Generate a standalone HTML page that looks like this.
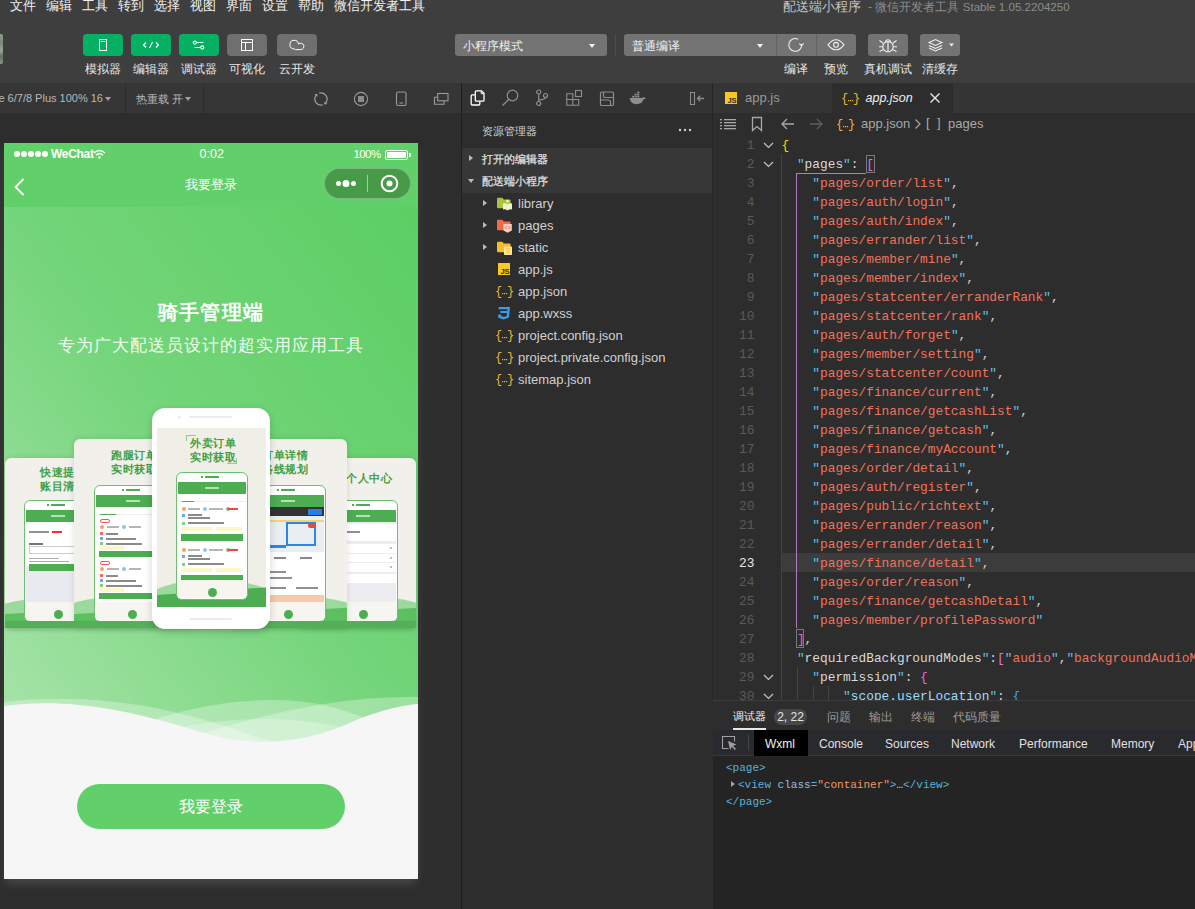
<!DOCTYPE html>
<html><head><meta charset="utf-8">
<style>
*{margin:0;padding:0;box-sizing:border-box}
html,body{width:1195px;height:909px;overflow:hidden;background:#2d2d2d;font-family:"Liberation Sans",sans-serif;color:#ccc}
.a{position:absolute}
svg{display:block}
#top{left:0;top:0;width:1195px;height:83px;background:#3e3e3e}
.menu{top:-3px;font-size:13px;color:#f0f0f0;white-space:nowrap}
.tbtn{top:34px;width:40px;height:22px;border-radius:4px;background:#05b062}
.tbtn.g{background:#6f6f6f}
.tlab{top:61px;font-size:12px;color:#e6e6e6;width:60px;text-align:center;white-space:nowrap}
.tri{width:0;height:0;border-left:3.5px solid transparent;border-right:3.5px solid transparent;border-top:4px solid #f0f0f0}
#simbar{left:0;top:83px;width:461px;height:30px;background:#363636}
#sim{left:0;top:113px;width:461px;height:796px;background:#2d2d2d}
#vline{left:461px;top:83px;width:1px;height:826px;background:#1e1e1e}
#actbar{left:462px;top:83px;width:251px;height:30px;background:#333333}
#side{left:462px;top:113px;width:250px;height:796px;background:#2d2d2d}
#sep{left:712px;top:83px;width:1px;height:617px;background:#262626}
#tabs{left:713px;top:83px;width:482px;height:30px;background:#353535}
#editor{left:713px;top:113px;width:482px;height:587px;background:#2d2d2d}
#panel{left:713px;top:700px;width:482px;height:209px;background:#252525}
.tri.r{border-top:3.5px solid transparent;border-bottom:3.5px solid transparent;border-left:4px solid #bbb;border-right:0}
.row{position:absolute;left:0;width:250px;height:22px}
.row .t2{position:absolute;left:21px;top:7.5px}
.row .fi{position:absolute;left:34px;top:3px}
.row span{position:absolute;left:56px;top:3.6px;font-size:13px;color:#d0d0d0;white-space:nowrap}
.ln{position:absolute;left:0;width:41.5px;text-align:right;font-family:"Liberation Mono",monospace;font-size:12.83px;line-height:19px;color:#5a5a5a}
.ln.cur{color:#e8e8e8}
.cl{position:absolute;font-family:"Liberation Mono",monospace;font-size:12.83px;line-height:19px;white-space:pre;color:#d4d4d4}
.q{color:#5fc0e8}.s{color:#f0725c}.k{color:#d8d8d8}.kb{color:#9cdcfe}.p{color:#d4d4d4}.y{color:#ffd700}.m{color:#da70d6}.b{color:#3aa3ff}
.dt{top:37px;font-size:12px;color:#e0e0e0;white-space:nowrap}
.tree{font-family:"Liberation Mono",monospace;font-size:11px;line-height:17px;white-space:pre}
.tg{color:#5db0d7}.at{color:#9bbbdc}.av{color:#f29766}
</style></head><body>
<div id="top" class="a">
 <div class="a menu" style="left:10px">文件</div>
 <div class="a menu" style="left:46px">编辑</div>
 <div class="a menu" style="left:82px">工具</div>
 <div class="a menu" style="left:118px">转到</div>
 <div class="a menu" style="left:154px">选择</div>
 <div class="a menu" style="left:190px">视图</div>
 <div class="a menu" style="left:226px">界面</div>
 <div class="a menu" style="left:262px">设置</div>
 <div class="a menu" style="left:298px">帮助</div>
 <div class="a menu" style="left:334px">微信开发者工具</div>
 <div class="a" style="left:783px;top:-2px;font-size:13px;white-space:nowrap;color:#c4c4c4">配送端小程序</div><div class="a" style="left:868px;top:-1px;font-size:12px;white-space:nowrap;color:#8c8c8c">- 微信开发者工具 <span style="font-size:11.6px">Stable 1.05.2204250</span></div>
 <div class="a" style="left:0;top:34px;width:3px;height:30px;background:linear-gradient(180deg,#8d9792 0%,#7c8a78 30%,#9aa09a 55%,#66705f 75%,#8b948c 100%);border-radius:0 2px 2px 0"></div>
 <div class="a tbtn" style="left:83px"><svg width="40" height="22"><rect x="16.5" y="5.5" width="7" height="11" fill="none" stroke="#fff" stroke-width="1"/><line x1="18" y1="7.5" x2="22" y2="7.5" stroke="#fff"/></svg></div>
 <div class="a tbtn" style="left:131px"><svg width="40" height="22"><path d="M15 8.5 L12.5 11 L15 13.5 M25 8.5 L27.5 11 L25 13.5 M21.5 8 L18.5 14" fill="none" stroke="#fff" stroke-width="1.1"/></svg></div>
 <div class="a tbtn" style="left:179px"><svg width="40" height="22"><path d="M17.5 8.5 H24.5 M15.5 13.5 H22" stroke="#fff" stroke-width="1" opacity="0.9"/><circle cx="15.8" cy="8.6" r="1.6" fill="none" stroke="#fff" stroke-width="1.1"/><circle cx="23.3" cy="13.5" r="1.6" fill="none" stroke="#fff" stroke-width="1.1"/></svg></div>
 <div class="a tbtn g" style="left:227px"><svg width="40" height="22"><rect x="14.5" y="5.5" width="11" height="11" fill="none" stroke="#fff"/><path d="M14.5 8.5 H25.5 M18.5 8.5 V16.5" stroke="#fff" fill="none"/></svg></div>
 <div class="a tbtn g" style="left:277px"><svg width="40" height="22"><path d="M17.2 14.9 A4.3 4.3 0 1 1 21.47 10.08 A3.2 3.2 0 1 1 23.7 15.6 L18.5 15.6 Q17.8 15.5 17.2 14.9 Z" fill="none" stroke="#fff" stroke-width="1"/></svg></div>
 <div class="a tlab" style="left:73px">模拟器</div>
 <div class="a tlab" style="left:121px">编辑器</div>
 <div class="a tlab" style="left:169px">调试器</div>
 <div class="a tlab" style="left:217px">可视化</div>
 <div class="a tlab" style="left:267px">云开发</div>

 <div class="a" style="left:455px;top:34px;width:152px;height:22px;background:#737373;border-radius:3px"></div>
 <div class="a" style="left:463px;top:38px;font-size:12px;color:#f0f0f0">小程序模式</div>
 <div class="a tri" style="left:589px;top:44px"></div>
 <div class="a" style="left:615px;top:34px;width:1px;height:22px;background:#4d4d4d"></div>
 <div class="a" style="left:624px;top:34px;width:232px;height:22px;background:#737373;border-radius:3px"></div>
 <div class="a" style="left:776px;top:34px;width:1px;height:22px;background:#626262"></div>
 <div class="a" style="left:816px;top:34px;width:1px;height:22px;background:#626262"></div>
 <div class="a" style="left:632px;top:38px;font-size:12px;color:#f0f0f0">普通编译</div>
 <div class="a tri" style="left:757px;top:44px"></div>
 <div class="a" style="left:777px;top:34px"><svg width="39" height="22"><path d="M21.20 5.25 A6.4 6.4 0 1 0 24.54 10.01 M22.24 9.61 L24.64 11.71 L26.54 9.21" fill="none" stroke="#f0f0f0" stroke-width="1.1"/></svg></div>
 <div class="a" style="left:817px;top:34px"><svg width="39" height="22"><path d="M11 10.8 Q19 0.8 27 10.8 Q19 20.8 11 10.8 Z" fill="none" stroke="#f0f0f0" stroke-width="1.1"/><circle cx="19" cy="10.8" r="2.4" fill="none" stroke="#f0f0f0" stroke-width="1.1"/></svg></div>
 <div class="a" style="left:868px;top:34px;width:40px;height:22px;background:#737373;border-radius:3px"><svg width="40" height="22"><circle cx="20" cy="12.8" r="5.2" fill="none" stroke="#f0f0f0" stroke-width="1.1"/><path d="M17 7.9 Q20 3.6 23 7.9" fill="none" stroke="#f0f0f0" stroke-width="1.1"/><line x1="20" y1="8.3" x2="20" y2="17.6" stroke="#d8d8d8" stroke-width="1.5"/><path d="M11.5 6.5 L15.2 9.2 M11 12.8 H14.8 M11.5 17.5 L15.2 15.8 M28.5 6.5 L24.8 9.2 M29 12.8 H25.2 M28.5 17.5 L24.8 15.8" fill="none" stroke="#f0f0f0" stroke-width="1.1"/></svg></div>
 <div class="a" style="left:920px;top:34px;width:40px;height:22px;background:#737373;border-radius:3px"><svg width="40" height="22"><path d="M9 8.5 L15.5 5.5 L22 8.5 L15.5 11.5 Z M9 11.5 L15.5 14.5 L22 11.5 M9 14 L15.5 17 L22 14" fill="none" stroke="#f0f0f0" stroke-width="1.1"/><path d="M29 9.5 L34 9.5 L31.5 12.5 Z" fill="#f0f0f0"/></svg></div>
 <div class="a tlab" style="left:766px">编译</div>
 <div class="a tlab" style="left:806px">预览</div>
 <div class="a tlab" style="left:858px">真机调试</div>
 <div class="a tlab" style="left:910px">清缓存</div>
</div>
<div id="simbar" class="a">
 <div class="a" style="right:358px;top:8.5px;font-size:11px;color:#b8b8b8;white-space:nowrap">iPhone 6/7/8 Plus 100% 16</div>
 <div class="a tri" style="left:105px;top:14px;border-top-color:#a0a0a0"></div>
 <div class="a" style="left:125px;top:0;width:1px;height:30px;background:#2e2e2e"></div>
 <div class="a" style="left:136px;top:8.5px;font-size:11px;color:#b8b8b8;white-space:nowrap">热重载 开</div>
 <div class="a tri" style="left:185px;top:14px;border-top-color:#a0a0a0"></div>
 <div class="a" style="left:203px;top:0;width:1px;height:30px;background:#2e2e2e"></div>
 <svg class="a" style="left:311px;top:6px" width="20" height="20"><path d="M8.22 4.17 A6.10 6.10 0 0 1 14.67 13.92 M11.89 15.80 A6.10 6.10 0 0 1 5.06 6.41" fill="none" stroke="#a0a0a0" stroke-width="1.2"/><path d="M13.39 15.45 L16.40 14.98 L13.33 12.41 Z M6.24 4.80 L3.27 5.48 L6.51 7.83 Z" fill="#a0a0a0"/></svg>
 <svg class="a" style="left:351px;top:6px" width="20" height="20"><circle cx="10" cy="10" r="6.6" fill="none" stroke="#9a9a9a" stroke-width="1.1"/><rect x="7" y="7" width="6" height="6" rx="0.5" fill="#8c8c8c"/></svg>
 <svg class="a" style="left:391px;top:6px" width="20" height="20"><rect x="5.5" y="3" width="9.5" height="13.5" rx="1.5" fill="none" stroke="#9a9a9a" stroke-width="1.1"/><line x1="8.5" y1="14" x2="12" y2="14" stroke="#9a9a9a" stroke-width="1.1"/></svg>
 <svg class="a" style="left:431px;top:5px" width="20" height="20"><rect x="6.7" y="5.5" width="10.3" height="7.3" fill="none" stroke="#9a9a9a" stroke-width="1.1"/><path d="M6.7 9.3 H3.5 V16.3 H13.1 V12.8" fill="none" stroke="#9a9a9a" stroke-width="1.1"/></svg>
</div>
<div id="sim" class="a"></div>
<div id="vline" class="a"></div>
<div class="a" style="left:4px;top:143px;width:414px;height:736px;box-shadow:0 6px 10px -2px rgba(150,150,150,0.3)"></div>
<div id="phone" class="a" style="left:4px;top:143px;width:414px;height:736px;overflow:hidden;background:#f6f6f6">
 <div class="a" style="left:0;top:64px;width:414px;height:540px;background:linear-gradient(to bottom left,#5bce63 0%,#74d57a 50%,#a9e4ab 100%)"></div>
 <div class="a" style="left:0;top:0;width:414px;height:64px;background:#62d06a"></div>
 <!-- status bar -->
 <svg class="a" style="left:9px;top:7.3px" width="36" height="8"><g fill="#fff"><circle cx="4" cy="4" r="3"/><circle cx="11" cy="4" r="3"/><circle cx="18" cy="4" r="3"/><circle cx="25" cy="4" r="3"/><circle cx="32" cy="4" r="3"/></g></svg>
 <div class="a" style="left:47px;top:4px;font-size:12px;font-weight:bold;color:#fff;letter-spacing:-0.3px">WeChat</div>
 <svg class="a" style="left:89px;top:6px" width="13" height="11"><path d="M1 4 Q6.5 -1 12 4 M3 6.2 Q6.5 3 10 6.2" fill="none" stroke="#fff" stroke-width="1.5"/><path d="M4.8 8 Q6.5 6.5 8.2 8 L6.5 10 Z" fill="#fff"/></svg>
 <div class="a" style="left:195.5px;top:3.5px;font-size:12.5px;color:#fff">0:02</div>
 <div class="a" style="left:349.5px;top:4.5px;font-size:11.5px;color:#fff;letter-spacing:-0.6px">100%</div>
 <div class="a" style="left:381px;top:7px;width:23px;height:10px;border:1px solid #fff;border-radius:2px;padding:1px"><div style="width:100%;height:100%;background:#fff;border-radius:1px"></div></div>
 <div class="a" style="left:404.5px;top:10px;width:2px;height:4px;background:#fff;border-radius:0 1px 1px 0"></div>
 <!-- nav -->
 <svg class="a" style="left:8px;top:34px" width="14" height="20"><path d="M11.5 2 L3.5 10 L11.5 18" fill="none" stroke="#fff" stroke-width="1.8"/></svg>
 <div class="a" style="left:0;top:33px;width:414px;text-align:center;font-size:13px;color:#fff">我要登录</div>
 <div class="a" style="left:320px;top:24.5px;width:87px;height:31px;border-radius:16px;background:#469a48;border:1px solid rgba(255,255,255,0.3)"></div>
 <svg class="a" style="left:320px;top:24.5px" width="87" height="31"><g fill="#fff"><circle cx="14.5" cy="15.5" r="2.5"/><circle cx="22" cy="15.5" r="3.5"/><circle cx="29.5" cy="15.5" r="2.5"/></g><line x1="43.5" y1="7" x2="43.5" y2="24" stroke="rgba(255,255,255,0.5)"/><circle cx="65.5" cy="15.5" r="7.8" fill="none" stroke="#fff" stroke-width="2"/><circle cx="65.5" cy="15.5" r="3" fill="#fff"/></svg>
 <!-- body text -->
 <div class="a" style="left:0;top:156px;width:414px;text-align:center;font-size:19.5px;font-weight:bold;color:#fff;letter-spacing:1.2px">骑手管理端</div>
 <div class="a" style="left:0;top:191px;width:414px;text-align:center;font-size:16.8px;color:rgba(255,255,255,0.92);letter-spacing:1px">专为广大配送员设计的超实用应用工具</div>
 <div id="mock"><div class="a" style="left:1.0px;top:315.0px;width:150.0px;height:170.0px;overflow:hidden;border-radius:6px 6px 0 0;background:#f1f0ea;box-shadow:0 0 6px rgba(0,0,0,0.12)">
<div class="a" style="left:-20px;top:138px;width:190px;height:40px;background:#9bd99c;border-radius:50% 50% 0 0"></div>
<div class="a" style="left:0;top:156px;width:150px;height:20px;background:#5cbf60;transform:skewY(-3deg);transform-origin:0 0"></div>
</div>
<div class="a" style="left:36.0px;top:322.0px;font-size:10.5px;color:#3f9f43;white-space:nowrap;letter-spacing:0.5px;line-height:14px;font-weight:bold">快速提现<br>账目清晰</div>
<div class="a" style="left:20.0px;top:357.0px;width:68.0px;height:122.0px;background:#fff;border:1.2px solid #6cc070;border-radius:6px"></div>
<div class="a" style="left:47.0px;top:361.0px;width:14.0px;height:1.5px;background:#4cae50"></div>
<div class="a" style="left:43.0px;top:361.0px;width:2.0px;height:1.5px;background:#4cae50"></div>
<div class="a" style="left:22.0px;top:367.0px;width:64.0px;height:12.0px;background:#4cae50"></div>
<div class="a" style="left:47.0px;top:372.0px;width:14.0px;height:2.0px;background:rgba(255,255,255,0.6)"></div>
<div class="a" style="left:22.0px;top:383.0px;width:64.0px;height:12.0px;background:#fff"></div>
<div class="a" style="left:25.0px;top:388.0px;width:20.0px;height:2.0px;background:#909090"></div>
<div class="a" style="left:48.0px;top:388.0px;width:10.0px;height:2.0px;background:#e33"></div>
<div class="a" style="left:22.0px;top:397.0px;width:64.0px;height:26.0px;background:#fff"></div>
<div class="a" style="left:25.0px;top:400.0px;width:14.0px;height:1.5px;background:#777"></div>
<div class="a" style="left:25.0px;top:403.0px;width:60.0px;height:8.0px;border:1px solid #ccc;background:#fff"></div>
<div class="a" style="left:25.0px;top:415.0px;width:30.0px;height:1.0px;background:#aaa"></div>
<div class="a" style="left:25.0px;top:418.0px;width:40.0px;height:1.0px;background:#aaa"></div>
<div class="a" style="left:22.0px;top:423.0px;width:64.0px;height:36.0px;background:#e9e9f0"></div>
<div class="a" style="left:25.0px;top:421.0px;width:58.0px;height:7.0px;background:#4cae50"></div>
<div class="a" style="left:22.0px;top:459.0px;width:64.0px;height:18.0px;background:#f6f5ef"></div>
<div class="a" style="left:49.5px;top:467.0px;width:9.0px;height:9.0px;background:#4cae50;border-radius:50%"></div>
<div class="a" style="left:296.0px;top:315.0px;width:116.0px;height:170.0px;overflow:hidden;border-radius:6px 6px 0 0;background:#f1f0ea;box-shadow:0 0 6px rgba(0,0,0,0.12)">
<div class="a" style="left:-20px;top:138px;width:156px;height:40px;background:#9bd99c;border-radius:50% 50% 0 0"></div>
<div class="a" style="left:0;top:156px;width:116px;height:20px;background:#5cbf60;transform:skewY(-3deg);transform-origin:0 0"></div>
</div>
<div class="a" style="left:342.0px;top:328.0px;font-size:10.5px;color:#3f9f43;white-space:nowrap;letter-spacing:0.5px;line-height:14px;font-weight:bold">个人中心</div>
<div class="a" style="left:324.0px;top:357.0px;width:70.0px;height:122.0px;background:#fff;border:1.2px solid #6cc070;border-radius:6px"></div>
<div class="a" style="left:352.0px;top:361.0px;width:14.0px;height:1.5px;background:#4cae50"></div>
<div class="a" style="left:348.0px;top:361.0px;width:2.0px;height:1.5px;background:#4cae50"></div>
<div class="a" style="left:326.0px;top:367.0px;width:66.0px;height:12.0px;background:#4cae50"></div>
<div class="a" style="left:352.0px;top:372.0px;width:14.0px;height:2.0px;background:rgba(255,255,255,0.6)"></div>
<div class="a" style="left:326.0px;top:379.0px;width:66.0px;height:80.0px;background:#ececf1"></div>
<div class="a" style="left:326.0px;top:381.0px;width:66.0px;height:17.0px;background:#fff"></div>
<div class="a" style="left:336.0px;top:388.0px;width:20.0px;height:1.5px;background:#909090"></div>
<div class="a" style="left:326.0px;top:401.0px;width:66.0px;height:8.5px;background:#fff"></div>
<div class="a" style="left:330.0px;top:404.5px;width:8.0px;height:1.5px;background:#777"></div>
<div class="a" style="left:386.0px;top:404.0px;width:2.0px;height:2.0px;background:#bbb"></div>
<div class="a" style="left:326.0px;top:410.5px;width:66.0px;height:8.5px;background:#fff"></div>
<div class="a" style="left:330.0px;top:414.0px;width:8.0px;height:1.5px;background:#777"></div>
<div class="a" style="left:386.0px;top:413.5px;width:2.0px;height:2.0px;background:#bbb"></div>
<div class="a" style="left:326.0px;top:420.0px;width:66.0px;height:8.5px;background:#fff"></div>
<div class="a" style="left:330.0px;top:423.5px;width:8.0px;height:1.5px;background:#777"></div>
<div class="a" style="left:386.0px;top:423.0px;width:2.0px;height:2.0px;background:#bbb"></div>
<div class="a" style="left:326.0px;top:431.0px;width:66.0px;height:9.0px;background:#fff"></div>
<div class="a" style="left:330.0px;top:434.5px;width:8.0px;height:1.5px;background:#777"></div>
<div class="a" style="left:326.0px;top:459.0px;width:66.0px;height:18.0px;background:#f6f5ef"></div>
<div class="a" style="left:354.5px;top:467.0px;width:9.0px;height:9.0px;background:#4cae50;border-radius:50%"></div>
<div class="a" style="left:70.0px;top:296.0px;width:120.0px;height:189.0px;overflow:hidden;border-radius:6px 6px 0 0;background:#f1f0ea;box-shadow:0 0 6px rgba(0,0,0,0.12)">
<div class="a" style="left:-20px;top:157px;width:160px;height:40px;background:#9bd99c;border-radius:50% 50% 0 0"></div>
<div class="a" style="left:0;top:175px;width:120px;height:20px;background:#5cbf60;transform:skewY(-3deg);transform-origin:0 0"></div>
</div>
<div class="a" style="left:107.0px;top:305.0px;font-size:10.5px;color:#3f9f43;white-space:nowrap;letter-spacing:0.5px;line-height:14px;font-weight:bold">跑腿订单<br>实时获取</div>
<div class="a" style="left:90.0px;top:342.0px;width:77.0px;height:137.0px;background:#fff;border:1.2px solid #6cc070;border-radius:6px"></div>
<div class="a" style="left:121.5px;top:346.0px;width:14.0px;height:1.5px;background:#4cae50"></div>
<div class="a" style="left:117.5px;top:346.0px;width:2.0px;height:1.5px;background:#4cae50"></div>
<div class="a" style="left:92.0px;top:352.0px;width:73.0px;height:12.0px;background:#4cae50"></div>
<div class="a" style="left:121.5px;top:357.0px;width:14.0px;height:2.0px;background:rgba(255,255,255,0.6)"></div>
<div class="a" style="left:92.0px;top:364.0px;width:73.0px;height:8.0px;background:#fff;border-bottom:1px solid #eee"></div>
<div class="a" style="left:96.0px;top:371.0px;width:16.0px;height:1.3px;background:#4cae50"></div>
<div class="a" style="left:92.0px;top:374.0px;width:73.0px;height:40.0px;background:#fff"></div>
<div class="a" style="left:96.0px;top:376.0px;width:10.0px;height:4.0px;border:1px solid #e55;border-radius:2px"></div>
<div class="a" style="left:96.0px;top:382.0px;width:4.0px;height:4.0px;background:#f7a35c;border-radius:2px"></div>
<div class="a" style="left:103.0px;top:383.0px;width:12.0px;height:1.5px;background:#b5b5b5"></div>
<div class="a" style="left:118.0px;top:382.0px;width:4.0px;height:4.0px;background:#8bc4f0;border-radius:2px"></div>
<div class="a" style="left:125.0px;top:383.0px;width:12.0px;height:1.5px;background:#b5b5b5"></div>
<div class="a" style="left:96.0px;top:389.0px;width:3.0px;height:3.0px;background:#f66"></div>
<div class="a" style="left:102.0px;top:390.0px;width:12.0px;height:1.5px;background:#8a8a8a"></div>
<div class="a" style="left:96.0px;top:394.0px;width:3.0px;height:3.0px;background:#6ae"></div>
<div class="a" style="left:102.0px;top:395.0px;width:30.0px;height:1.5px;background:#8a8a8a"></div>
<div class="a" style="left:96.0px;top:399.0px;width:3.0px;height:3.0px;background:#8c8"></div>
<div class="a" style="left:102.0px;top:400.0px;width:36.0px;height:1.5px;background:#8a8a8a"></div>
<div class="a" style="left:96.0px;top:403.0px;width:24.0px;height:4.0px;background:#fbf7c8"></div>
<div class="a" style="left:95.0px;top:408.0px;width:67.0px;height:6.0px;background:#4cae50"></div>
<div class="a" style="left:92.0px;top:416.0px;width:73.0px;height:40.0px;background:#fff"></div>
<div class="a" style="left:96.0px;top:418.0px;width:10.0px;height:4.0px;border:1px solid #e55;border-radius:2px"></div>
<div class="a" style="left:96.0px;top:424.0px;width:4.0px;height:4.0px;background:#f7a35c;border-radius:2px"></div>
<div class="a" style="left:103.0px;top:425.0px;width:12.0px;height:1.5px;background:#b5b5b5"></div>
<div class="a" style="left:118.0px;top:424.0px;width:4.0px;height:4.0px;background:#8bc4f0;border-radius:2px"></div>
<div class="a" style="left:125.0px;top:425.0px;width:12.0px;height:1.5px;background:#b5b5b5"></div>
<div class="a" style="left:96.0px;top:431.0px;width:3.0px;height:3.0px;background:#f66"></div>
<div class="a" style="left:102.0px;top:432.0px;width:12.0px;height:1.5px;background:#8a8a8a"></div>
<div class="a" style="left:96.0px;top:436.0px;width:3.0px;height:3.0px;background:#6ae"></div>
<div class="a" style="left:102.0px;top:437.0px;width:30.0px;height:1.5px;background:#8a8a8a"></div>
<div class="a" style="left:96.0px;top:441.0px;width:3.0px;height:3.0px;background:#8c8"></div>
<div class="a" style="left:102.0px;top:442.0px;width:36.0px;height:1.5px;background:#8a8a8a"></div>
<div class="a" style="left:96.0px;top:445.0px;width:24.0px;height:4.0px;background:#fbf7c8"></div>
<div class="a" style="left:95.0px;top:450.0px;width:67.0px;height:6.0px;background:#4cae50"></div>
<div class="a" style="left:92.0px;top:459.0px;width:73.0px;height:18.0px;background:#f6f5ef"></div>
<div class="a" style="left:124.0px;top:467.0px;width:9.0px;height:9.0px;background:#4cae50;border-radius:50%"></div>
<div class="a" style="left:226.0px;top:296.0px;width:117.0px;height:189.0px;overflow:hidden;border-radius:6px 6px 0 0;background:#f1f0ea;box-shadow:0 0 6px rgba(0,0,0,0.12)">
<div class="a" style="left:-20px;top:157px;width:157px;height:40px;background:#9bd99c;border-radius:50% 50% 0 0"></div>
<div class="a" style="left:0;top:175px;width:117px;height:20px;background:#5cbf60;transform:skewY(-3deg);transform-origin:0 0"></div>
</div>
<div class="a" style="left:258.0px;top:305.0px;font-size:10.5px;color:#3f9f43;white-space:nowrap;letter-spacing:0.5px;line-height:14px;font-weight:bold">订单详情<br>路线规划</div>
<div class="a" style="left:246.0px;top:342.0px;width:76.0px;height:137.0px;background:#fff;border:1.2px solid #6cc070;border-radius:6px"></div>
<div class="a" style="left:277.0px;top:346.0px;width:14.0px;height:1.5px;background:#4cae50"></div>
<div class="a" style="left:273.0px;top:346.0px;width:2.0px;height:1.5px;background:#4cae50"></div>
<div class="a" style="left:248.0px;top:352.0px;width:72.0px;height:12.0px;background:#4cae50"></div>
<div class="a" style="left:277.0px;top:357.0px;width:14.0px;height:2.0px;background:rgba(255,255,255,0.6)"></div>
<div class="a" style="left:248.0px;top:364.0px;width:72.0px;height:9.0px;background:#333"></div>
<div class="a" style="left:304.0px;top:365.5px;width:14.0px;height:6.0px;background:#2a7de1"></div>
<div class="a" style="left:248.0px;top:373.0px;width:72.0px;height:36.0px;background:#e8eef2"></div>
<div class="a" style="left:248.0px;top:377.0px;width:72.0px;height:2.0px;background:#f4d46b"></div>
<div class="a" style="left:282.0px;top:379.0px;width:30.0px;height:24.0px;border:2.5px solid #2a86e8"></div>
<div class="a" style="left:248.0px;top:402.0px;width:34.0px;height:3.0px;background:#2a86e8"></div>
<div class="a" style="left:304.0px;top:380.0px;width:8.0px;height:5.0px;background:#e84a3a;border-radius:3px"></div>
<div class="a" style="left:248.0px;top:409.0px;width:72.0px;height:14.0px;background:#fff"></div>
<div class="a" style="left:270.0px;top:414.0px;width:12.0px;height:1.5px;background:#888"></div>
<div class="a" style="left:296.0px;top:414.0px;width:12.0px;height:1.5px;background:#888"></div>
<div class="a" style="left:248.0px;top:424.0px;width:72.0px;height:30.0px;background:#fff"></div>
<div class="a" style="left:262.0px;top:428.0px;width:20.0px;height:1.5px;background:#909090"></div>
<div class="a" style="left:262.0px;top:434.0px;width:26.0px;height:1.5px;background:#909090"></div>
<div class="a" style="left:262.0px;top:444.0px;width:20.0px;height:1.5px;background:#909090"></div>
<div class="a" style="left:292.0px;top:444.0px;width:22.0px;height:1.5px;background:#909090"></div>
<div class="a" style="left:248.0px;top:452.0px;width:72.0px;height:9.0px;background:#f6c9a8"></div>
<div class="a" style="left:248.0px;top:461.0px;width:72.0px;height:12.0px;background:#fff"></div>
<div class="a" style="left:248.0px;top:459.0px;width:72.0px;height:18.0px;background:#f6f5ef"></div>
<div class="a" style="left:279.5px;top:467.0px;width:9.0px;height:9.0px;background:#4cae50;border-radius:50%"></div>
<div class="a" style="left:1.0px;top:478.0px;width:411.0px;height:7.0px;background:#53b057;border-radius:0 0 5px 5px;box-shadow:0 2px 4px rgba(0,0,0,0.12)"></div>
<div class="a" style="left:148.0px;top:265.0px;width:118.0px;height:220.5px;background:#fff;border-radius:13px;box-shadow:0 3px 8px rgba(0,0,0,0.18)"></div>
<div class="a" style="left:185.0px;top:273.0px;width:43.0px;height:2.0px;background:#ececec;border-radius:1px"></div>
<div class="a" style="left:174.0px;top:273.0px;width:3.0px;height:3.0px;background:#ececec;border-radius:50%"></div>
<div class="a" style="left:185.0px;top:475.0px;width:43.0px;height:2.0px;background:#ececec;border-radius:1px"></div>
<div class="a" style="left:153.0px;top:285.0px;width:108.5px;height:179px;overflow:hidden;background:#efeee7">
<div class="a" style="left:-10px;top:152px;width:130px;height:40px;background:#9bd99c;border-radius:50% 50% 0 0"></div>
<div class="a" style="left:0;top:167px;width:109px;height:20px;background:#4cae50;transform:skewY(-4deg);transform-origin:0 100%"></div>
</div>
<div class="a" style="left:186.0px;top:294.0px;font-size:10.5px;line-height:13.5px;color:#3f9f43;white-space:nowrap;letter-spacing:0.5px;font-weight:bold">外卖订单<br>实时获取</div>
<div class="a" style="left:182.0px;top:292.0px;width:1.0px;height:6.0px;background:#8fcf92"></div>
<div class="a" style="left:182.0px;top:292.0px;width:10.0px;height:1.0px;background:#8fcf92"></div>
<div class="a" style="left:232.0px;top:315.0px;width:1.0px;height:6.0px;background:#8fcf92"></div>
<div class="a" style="left:223.0px;top:320.0px;width:10.0px;height:1.0px;background:#8fcf92"></div>
<div class="a" style="left:172.0px;top:329.0px;width:72.0px;height:128.0px;background:#fff;border:1.2px solid #6cc070;border-radius:6px"></div>
<div class="a" style="left:201.0px;top:333.0px;width:14.0px;height:1.5px;background:#4cae50"></div>
<div class="a" style="left:197.0px;top:333.0px;width:2.0px;height:1.5px;background:#4cae50"></div>
<div class="a" style="left:174.0px;top:339.0px;width:68.0px;height:12.0px;background:#4cae50"></div>
<div class="a" style="left:201.0px;top:344.0px;width:14.0px;height:2.0px;background:rgba(255,255,255,0.6)"></div>
<div class="a" style="left:174.0px;top:351.0px;width:68.0px;height:8.0px;background:#fff;border-bottom:1px solid #eee"></div>
<div class="a" style="left:178.0px;top:358.0px;width:12.0px;height:1.3px;background:#4cae50"></div>
<div class="a" style="left:174.0px;top:361.0px;width:68.0px;height:39.0px;background:#fff"></div>
<div class="a" style="left:178.0px;top:364.0px;width:4.0px;height:4.0px;background:#f7a35c;border-radius:2px"></div>
<div class="a" style="left:184.0px;top:365.0px;width:12.0px;height:1.5px;background:#b5b5b5"></div>
<div class="a" style="left:199.0px;top:364.0px;width:4.0px;height:4.0px;background:#8bc4f0;border-radius:2px"></div>
<div class="a" style="left:205.0px;top:365.0px;width:14.0px;height:1.5px;background:#b5b5b5"></div>
<div class="a" style="left:222.0px;top:364.0px;width:4.0px;height:4.0px;background:#6c6;border-radius:2px"></div>
<div class="a" style="left:224.0px;top:365.0px;width:10.0px;height:1.5px;background:#e44"></div>
<div class="a" style="left:178.0px;top:371.0px;width:3.0px;height:3.0px;background:#6ae"></div>
<div class="a" style="left:184.0px;top:371.0px;width:14.0px;height:1.5px;background:#8a8a8a"></div>
<div class="a" style="left:184.0px;top:374.0px;width:22.0px;height:1.5px;background:#8a8a8a"></div>
<div class="a" style="left:178.0px;top:379.0px;width:3.0px;height:3.0px;background:#8c8"></div>
<div class="a" style="left:184.0px;top:379.0px;width:36.0px;height:1.5px;background:#8a8a8a"></div>
<div class="a" style="left:178.0px;top:384.0px;width:30.0px;height:4.0px;background:#fbf7c8"></div>
<div class="a" style="left:212.0px;top:384.0px;width:26.0px;height:4.0px;background:#fbf7c8"></div>
<div class="a" style="left:177.0px;top:391.0px;width:62.0px;height:7.0px;background:#4cae50"></div>
<div class="a" style="left:174.0px;top:402.0px;width:68.0px;height:39.0px;background:#fff"></div>
<div class="a" style="left:178.0px;top:405.0px;width:4.0px;height:4.0px;background:#f7a35c;border-radius:2px"></div>
<div class="a" style="left:184.0px;top:406.0px;width:12.0px;height:1.5px;background:#b5b5b5"></div>
<div class="a" style="left:199.0px;top:405.0px;width:4.0px;height:4.0px;background:#8bc4f0;border-radius:2px"></div>
<div class="a" style="left:205.0px;top:406.0px;width:14.0px;height:1.5px;background:#b5b5b5"></div>
<div class="a" style="left:222.0px;top:405.0px;width:4.0px;height:4.0px;background:#6c6;border-radius:2px"></div>
<div class="a" style="left:224.0px;top:406.0px;width:10.0px;height:1.5px;background:#e44"></div>
<div class="a" style="left:178.0px;top:412.0px;width:3.0px;height:3.0px;background:#6ae"></div>
<div class="a" style="left:184.0px;top:412.0px;width:14.0px;height:1.5px;background:#8a8a8a"></div>
<div class="a" style="left:184.0px;top:415.0px;width:22.0px;height:1.5px;background:#8a8a8a"></div>
<div class="a" style="left:178.0px;top:420.0px;width:3.0px;height:3.0px;background:#8c8"></div>
<div class="a" style="left:184.0px;top:420.0px;width:36.0px;height:1.5px;background:#8a8a8a"></div>
<div class="a" style="left:178.0px;top:425.0px;width:30.0px;height:4.0px;background:#fbf7c8"></div>
<div class="a" style="left:212.0px;top:425.0px;width:26.0px;height:4.0px;background:#fbf7c8"></div>
<div class="a" style="left:177.0px;top:432.0px;width:62.0px;height:7.0px;background:#4cae50"></div>
<div class="a" style="left:174.0px;top:437.0px;width:68.0px;height:18.0px;background:#f6f5ef"></div>
<div class="a" style="left:203.5px;top:445.0px;width:9.0px;height:9.0px;background:#4cae50;border-radius:50%"></div></div><!--endmock-->
 <!-- waves -->
 <svg class="a" style="left:0;top:0" width="414" height="736"><path d="M0 559 C 80 550, 160 560, 246 592 C 300 610, 360 600, 414 598 V736 H0 Z" fill="rgba(255,255,255,0.3)"/><path d="M90 602 C 160 565, 250 548, 320 562 C 360 572, 390 588, 414 596 V736 H90 Z" fill="rgba(255,255,255,0.3)"/><path d="M150 606 C 240 575, 330 552, 414 554 V736 H150 Z" fill="rgba(255,255,255,0.3)"/><path d="M120 600 C 200 572, 290 568, 360 590 L414 600 V736 H120 Z" fill="rgba(255,255,255,0.25)"/><path d="M0 563 C 60 555, 120 565, 200 590 C 245 604, 300 602, 350 578 C 380 566, 400 562, 414 561 V736 H0 Z" fill="#f6f6f6"/></svg>
 <div class="a" style="left:73px;top:641px;width:268px;height:45px;border-radius:23px;background:#62d06a;color:#fff;font-size:16px;text-align:center;line-height:45px">我要登录</div>
</div>
<div id="actbar" class="a">
 <svg class="a" style="left:4px;top:3px" width="24" height="24"><path d="M9.3 8.9 H6.2 Q5.2 8.9 5.2 9.9 V18 Q5.2 19 6.2 19 H12.8 Q13.8 19 13.8 18 V15.2" fill="none" stroke="#fff" stroke-width="1.3"/><path d="M10.3 4.8 H15.6 L18 7.3 V14.2 Q18 15.2 17 15.2 H10.3 Q9.3 15.2 9.3 14.2 V5.8 Q9.3 4.8 10.3 4.8 Z" fill="none" stroke="#fff" stroke-width="1.3"/><path d="M15.2 5 V7.7 H17.8" fill="none" stroke="#fff" stroke-width="1"/></svg>
 <svg class="a" style="left:38px;top:5px" width="24" height="24"><circle cx="12.5" cy="7.5" r="5.3" fill="none" stroke="#8e8e8e" stroke-width="1.2"/><line x1="8.7" y1="11.5" x2="2.5" y2="17.5" stroke="#8e8e8e" stroke-width="1.3"/></svg>
 <svg class="a" style="left:70px;top:5px" width="24" height="24"><circle cx="6.7" cy="4" r="2" fill="none" stroke="#8e8e8e" stroke-width="1.2"/><circle cx="13.5" cy="7.5" r="2" fill="none" stroke="#8e8e8e" stroke-width="1.2"/><circle cx="6.7" cy="15.5" r="2" fill="none" stroke="#8e8e8e" stroke-width="1.2"/><path d="M6.7 6 V13.5 M13.5 9.5 Q13.5 11.5 6.7 12" fill="none" stroke="#8e8e8e" stroke-width="1.2"/></svg>
 <svg class="a" style="left:102px;top:5px" width="24" height="24"><path d="M2.8 5.8 H8.8 V17.3 H2.8 Z M2.8 11.5 H14.7 V17.3 H8.8" fill="none" stroke="#8e8e8e" stroke-width="1.1"/><rect x="11.5" y="2.5" width="6" height="6" fill="none" stroke="#8e8e8e" stroke-width="1.1"/></svg>
 <svg class="a" style="left:136px;top:5px" width="24" height="24"><rect x="2.5" y="4" width="13" height="13.5" rx="1" fill="none" stroke="#8e8e8e" stroke-width="1.2"/><path d="M5.5 4 V8 Q5.5 9.5 7 9.5 H15.5 M2.5 12 H10.5 Q12.5 12 12.5 14 V17.5" fill="none" stroke="#8e8e8e" stroke-width="1.2"/></svg>
 <svg class="a" style="left:166px;top:5px" width="24" height="24"><path d="M1.8 10 H14.2 L15.2 9 L18.2 10.2 L15.6 11.3 Q14.2 16.2 8.6 16.2 Q2.4 16.2 1.8 10 Z" fill="#8e8e8e"/><g fill="#8e8e8e"><rect x="4" y="7.8" width="2.1" height="1.7"/><rect x="6.6" y="7.8" width="2.1" height="1.7"/><rect x="9.2" y="7.8" width="2.1" height="1.7"/><rect x="6.6" y="5.7" width="2.1" height="1.7"/><rect x="9.2" y="5.7" width="2.1" height="1.7"/><rect x="9.2" y="3.6" width="2.1" height="1.7"/></g></svg>
 <svg class="a" style="left:226px;top:5px" width="24" height="24"><rect x="2.5" y="4.5" width="4" height="12" fill="none" stroke="#8e8e8e" stroke-width="1.1"/><path d="M16 10.5 H9.5 M12.2 7.8 L9.5 10.5 L12.2 13.2" fill="none" stroke="#8e8e8e" stroke-width="1.3"/></svg>
</div>
<div id="side" class="a">
 <div class="a" style="left:20px;top:11px;font-size:11px;color:#cfcfcf">资源管理器</div>
 <svg class="a" style="left:216px;top:15px" width="16" height="4"><g fill="#cfcfcf"><circle cx="2" cy="2" r="1.2"/><circle cx="7" cy="2" r="1.2"/><circle cx="12" cy="2" r="1.2"/></g></svg>
 <div class="a" style="left:0;top:34.5px;width:250px;height:45px;background:#373737"></div>
 <div class="a tri r" style="left:7px;top:42px"></div>
 <div class="a" style="left:20px;top:39px;font-size:11px;font-weight:bold;color:#cfcfcf">打开的编辑器</div>
 <div class="a tri" style="left:6px;top:66px;border-top-color:#bbb"></div>
 <div class="a" style="left:20px;top:61px;font-size:11px;font-weight:bold;color:#cfcfcf">配送端小程序</div>
 <div class="row" style="top:79px"><div class="tri r t2"></div><svg class="fi" width="17" height="16" style="top:4px"><path d="M1 2.7 Q1 1.7 2 1.7 H6.3 L7.8 3.4 H13.6 Q14.6 3.4 14.6 4.4 V11.3 Q14.6 12.3 13.6 12.3 H2 Q1 12.3 1 11.3 Z" fill="#a9c23f"/><path d="M7 7.5 Q9.2 6.8 11.5 8.2 Q13.8 6.8 16 7.5 V13.5 Q13.8 12.8 11.5 14.5 Q9.2 12.8 7 13.5 Z" fill="#eef3c6"/><circle cx="11.5" cy="5.2" r="1.4" fill="#eef3c6"/></svg><span>library</span></div>
 <div class="row" style="top:101px"><div class="tri r t2"></div><svg class="fi" width="17" height="16" style="top:4px"><path d="M1 2.7 Q1 1.7 2 1.7 H6.3 L7.8 3.4 H13.6 Q14.6 3.4 14.6 4.4 V11.3 Q14.6 12.3 13.6 12.3 H2 Q1 12.3 1 11.3 Z" fill="#f26b47"/><path d="M7.5 6 H15.8 V12.5 L11.6 14.8 L7.5 12.5 Z" fill="#f8cfc2"/><path d="M10.4 8.3 L9.2 9.6 L10.4 10.9 M12.8 8.3 L14 9.6 L12.8 10.9" stroke="#f05a35" fill="none" stroke-width="0.9"/></svg><span>pages</span></div>
 <div class="row" style="top:123px"><div class="tri r t2"></div><svg class="fi" width="17" height="16" style="top:4px"><path d="M1 2.7 Q1 1.7 2 1.7 H6.3 L7.8 3.4 H13.6 Q14.6 3.4 14.6 4.4 V11.3 Q14.6 12.3 13.6 12.3 H2 Q1 12.3 1 11.3 Z" fill="#f7bb2a"/><rect x="8" y="6.5" width="8" height="8.5" rx="0.8" fill="#fbe6ad"/><path d="M10 8.8 H14.5 M10 10.8 H14.5 M10 12.8 H14.5" stroke="#f7bb2a" stroke-width="0.9"/></svg><span>static</span></div>
 <div class="row" style="top:145px"><svg class="fi" width="16" height="16"><rect x="2" y="2" width="12" height="12" fill="#f9c823"/><text x="13.3" y="13.2" text-anchor="end" font-size="7.6" font-family="Liberation Sans" font-weight="bold" fill="#2e2a18" letter-spacing="-0.3">JS</text></svg><span>app.js</span></div>
 <div class="row" style="top:167px"><svg class="fi" width="18" height="16"><text x="-1" y="12" font-size="12" font-family="Liberation Mono" fill="#f0b53b">{</text><text x="11" y="12" font-size="12" font-family="Liberation Mono" fill="#f0b53b">}</text><g fill="#f0b53b"><rect x="6" y="10" width="1.2" height="1.2"/><rect x="8" y="10" width="1.2" height="1.2"/><rect x="10" y="10" width="1.2" height="1.2"/></g></svg><span>app.json</span></div>
 <div class="row" style="top:189px"><svg class="fi" width="16" height="16"><path d="M2.5 2 H14 L13 12.5 L7.5 14.5 L2 12.5 L2.5 9.5 H5 L5.2 11 L8 12 L10.7 11 L11 8 H4.5 L4.3 6 H11.3 L11.5 4.2 H2.8 Z" fill="#3b9ce8"/></svg><span>app.wxss</span></div>
 <div class="row" style="top:211px"><svg class="fi" width="18" height="16"><text x="-1" y="12" font-size="12" font-family="Liberation Mono" fill="#f0b53b">{</text><text x="11" y="12" font-size="12" font-family="Liberation Mono" fill="#f0b53b">}</text><g fill="#f0b53b"><rect x="6" y="10" width="1.2" height="1.2"/><rect x="8" y="10" width="1.2" height="1.2"/><rect x="10" y="10" width="1.2" height="1.2"/></g></svg><span>project.config.json</span></div>
 <div class="row" style="top:233px"><svg class="fi" width="18" height="16"><text x="-1" y="12" font-size="12" font-family="Liberation Mono" fill="#f0b53b">{</text><text x="11" y="12" font-size="12" font-family="Liberation Mono" fill="#f0b53b">}</text><g fill="#f0b53b"><rect x="6" y="10" width="1.2" height="1.2"/><rect x="8" y="10" width="1.2" height="1.2"/><rect x="10" y="10" width="1.2" height="1.2"/></g></svg><span>project.private.config.json</span></div>
 <div class="row" style="top:255px"><svg class="fi" width="18" height="16"><text x="-1" y="12" font-size="12" font-family="Liberation Mono" fill="#f0b53b">{</text><text x="11" y="12" font-size="12" font-family="Liberation Mono" fill="#f0b53b">}</text><g fill="#f0b53b"><rect x="6" y="10" width="1.2" height="1.2"/><rect x="8" y="10" width="1.2" height="1.2"/><rect x="10" y="10" width="1.2" height="1.2"/></g></svg><span>sitemap.json</span></div>
</div>
<div id="tabs" class="a">
 <div class="a" style="left:0;top:0;width:119px;height:30px;background:#353535"></div>
 <svg class="a" style="left:12px;top:9px" width="12" height="12"><rect x="0" y="0" width="12" height="12" fill="#f9c823"/><text x="11.3" y="11.2" text-anchor="end" font-size="7.6" font-family="Liberation Sans" font-weight="bold" fill="#2e2a18" letter-spacing="-0.3">JS</text></svg>
 <div class="a" style="left:32px;top:7px;font-size:13px;color:#9a9a9a">app.js</div>
 <div class="a" style="left:119px;top:0;width:121px;height:30px;background:#2d2d2d"></div>
 <svg class="a" style="left:129px;top:7px" width="18" height="16"><text x="-1" y="12" font-size="12" font-family="Liberation Mono" fill="#f0b53b">{</text><text x="11" y="12" font-size="12" font-family="Liberation Mono" fill="#f0b53b">}</text><g fill="#f0b53b"><rect x="6" y="10" width="1.2" height="1.2"/><rect x="8" y="10" width="1.2" height="1.2"/><rect x="10" y="10" width="1.2" height="1.2"/></g></svg>
 <div class="a" style="left:152.5px;top:7.5px;font-size:12.5px;color:#f2f2f2;font-style:italic">app.json</div>
 <svg class="a" style="left:216px;top:9px" width="12" height="12"><path d="M1.5 1.5 L10.5 10.5 M10.5 1.5 L1.5 10.5" stroke="#e8e8e8" stroke-width="1.4"/></svg>
</div>
<div id="editor" class="a">
 <svg class="a" style="left:7px;top:4px" width="18" height="14"><g fill="#a8a8a8"><rect x="0" y="2" width="2" height="1.3"/><rect x="0" y="5" width="2" height="1.3"/><rect x="0" y="8" width="2" height="1.3"/><rect x="0" y="11" width="2" height="1.3"/><rect x="4" y="2" width="12" height="1.3"/><rect x="4" y="5" width="12" height="1.3"/><rect x="4" y="8" width="12" height="1.3"/><rect x="4" y="11" width="12" height="1.3"/></g></svg>
 <svg class="a" style="left:38px;top:3px" width="14" height="16"><path d="M1.5 1.5 H10.5 V14.5 L6 10.5 L1.5 14.5 Z" fill="none" stroke="#a8a8a8" stroke-width="1.3"/></svg>
 <svg class="a" style="left:67px;top:4px" width="16" height="14"><path d="M14 7 H2 M7 2 L2 7 L7 12" fill="none" stroke="#a8a8a8" stroke-width="1.3"/></svg>
 <svg class="a" style="left:95px;top:4px" width="16" height="14"><path d="M2 7 H14 M9 2 L14 7 L9 12" fill="none" stroke="#5e5e5e" stroke-width="1.3"/></svg>
 <svg class="a" style="left:124px;top:3px" width="18" height="16"><text x="-1" y="12" font-size="12" font-family="Liberation Mono" fill="#f0b53b">{</text><text x="11" y="12" font-size="12" font-family="Liberation Mono" fill="#f0b53b">}</text><g fill="#f0b53b"><rect x="6" y="10" width="1.2" height="1.2"/><rect x="8" y="10" width="1.2" height="1.2"/><rect x="10" y="10" width="1.2" height="1.2"/></g></svg>
 <div class="a" style="left:148px;top:3px;font-size:13px;color:#a8a8a8;white-space:nowrap">app.json</div>
 <svg class="a" style="left:200px;top:5px" width="10" height="12"><path d="M2.5 1.5 L7 6 L2.5 10.5" fill="none" stroke="#a8a8a8" stroke-width="1.2"/></svg>
 <div class="a" style="left:213px;top:2px;font-size:13px;color:#a8a8a8;white-space:nowrap">[</div><div class="a" style="left:224px;top:2px;font-size:13px;color:#a8a8a8;white-space:nowrap">]</div>
 <div class="a" style="left:235px;top:3px;font-size:13px;color:#a8a8a8;white-space:nowrap">pages</div>
 <div class="a" style="left:68px;top:440px;width:414px;height:19px;background:#3c3c3c"></div>
 <div class="a" style="left:68px;top:41px;width:1px;height:550px;background:#444"></div>
 <div class="a" style="left:84px;top:554px;width:1px;height:33px;background:#444"></div>
 <div class="a" style="left:99.5px;top:573px;width:1px;height:14px;background:#444"></div>
 <div class="a" style="left:115px;top:573px;width:1px;height:14px;background:#444"></div>
 <div class="a" style="left:83px;top:60px;width:70px;height:1px;background:#b07cc6"></div>
 <div class="a" style="left:83px;top:60px;width:1px;height:455px;background:#b07cc6"></div>
 <div class="a" style="left:153px;top:42px;width:9px;height:18px;border:1px solid #7a7a7a"></div>
 <div class="a" style="left:83px;top:516px;width:8px;height:19px;border:1px solid #7a7a7a"></div>
 <div id="code" class="a" style="left:0;top:0.8px;width:482px;height:586px;overflow:hidden">
<div class="ln" style="top:22px">1</div>
<div class="cl" style="top:22px;left:68.50px"><span class="y">{</span></div>
<svg class="a" style="left:50px;top:22px" width="12" height="19"><path d="M1 7 L5.5 11.5 L10 7" fill="none" stroke="#c5c5c5" stroke-width="1.2"/></svg>
<div class="ln" style="top:41px">2</div>
<div class="cl" style="top:41px;left:83.90px"><span class="k"><span class="q">"</span>pages<span class="q">"</span></span><span class="p">: </span><span class="m bx">[</span></div>
<svg class="a" style="left:50px;top:41px" width="12" height="19"><path d="M1 7 L5.5 11.5 L10 7" fill="none" stroke="#c5c5c5" stroke-width="1.2"/></svg>
<div class="ln" style="top:60px">3</div>
<div class="cl" style="top:60px;left:99.30px"><span class="q">"</span><span class="s">pages/order/list</span><span class="q">"</span><span class="p">,</span></div>
<div class="ln" style="top:79px">4</div>
<div class="cl" style="top:79px;left:99.30px"><span class="q">"</span><span class="s">pages/auth/login</span><span class="q">"</span><span class="p">,</span></div>
<div class="ln" style="top:98px">5</div>
<div class="cl" style="top:98px;left:99.30px"><span class="q">"</span><span class="s">pages/auth/index</span><span class="q">"</span><span class="p">,</span></div>
<div class="ln" style="top:117px">6</div>
<div class="cl" style="top:117px;left:99.30px"><span class="q">"</span><span class="s">pages/errander/list</span><span class="q">"</span><span class="p">,</span></div>
<div class="ln" style="top:136px">7</div>
<div class="cl" style="top:136px;left:99.30px"><span class="q">"</span><span class="s">pages/member/mine</span><span class="q">"</span><span class="p">,</span></div>
<div class="ln" style="top:155px">8</div>
<div class="cl" style="top:155px;left:99.30px"><span class="q">"</span><span class="s">pages/member/index</span><span class="q">"</span><span class="p">,</span></div>
<div class="ln" style="top:174px">9</div>
<div class="cl" style="top:174px;left:99.30px"><span class="q">"</span><span class="s">pages/statcenter/erranderRank</span><span class="q">"</span><span class="p">,</span></div>
<div class="ln" style="top:193px">10</div>
<div class="cl" style="top:193px;left:99.30px"><span class="q">"</span><span class="s">pages/statcenter/rank</span><span class="q">"</span><span class="p">,</span></div>
<div class="ln" style="top:212px">11</div>
<div class="cl" style="top:212px;left:99.30px"><span class="q">"</span><span class="s">pages/auth/forget</span><span class="q">"</span><span class="p">,</span></div>
<div class="ln" style="top:231px">12</div>
<div class="cl" style="top:231px;left:99.30px"><span class="q">"</span><span class="s">pages/member/setting</span><span class="q">"</span><span class="p">,</span></div>
<div class="ln" style="top:250px">13</div>
<div class="cl" style="top:250px;left:99.30px"><span class="q">"</span><span class="s">pages/statcenter/count</span><span class="q">"</span><span class="p">,</span></div>
<div class="ln" style="top:269px">14</div>
<div class="cl" style="top:269px;left:99.30px"><span class="q">"</span><span class="s">pages/finance/current</span><span class="q">"</span><span class="p">,</span></div>
<div class="ln" style="top:288px">15</div>
<div class="cl" style="top:288px;left:99.30px"><span class="q">"</span><span class="s">pages/finance/getcashList</span><span class="q">"</span><span class="p">,</span></div>
<div class="ln" style="top:307px">16</div>
<div class="cl" style="top:307px;left:99.30px"><span class="q">"</span><span class="s">pages/finance/getcash</span><span class="q">"</span><span class="p">,</span></div>
<div class="ln" style="top:326px">17</div>
<div class="cl" style="top:326px;left:99.30px"><span class="q">"</span><span class="s">pages/finance/myAccount</span><span class="q">"</span><span class="p">,</span></div>
<div class="ln" style="top:345px">18</div>
<div class="cl" style="top:345px;left:99.30px"><span class="q">"</span><span class="s">pages/order/detail</span><span class="q">"</span><span class="p">,</span></div>
<div class="ln" style="top:364px">19</div>
<div class="cl" style="top:364px;left:99.30px"><span class="q">"</span><span class="s">pages/auth/register</span><span class="q">"</span><span class="p">,</span></div>
<div class="ln" style="top:383px">20</div>
<div class="cl" style="top:383px;left:99.30px"><span class="q">"</span><span class="s">pages/public/richtext</span><span class="q">"</span><span class="p">,</span></div>
<div class="ln" style="top:402px">21</div>
<div class="cl" style="top:402px;left:99.30px"><span class="q">"</span><span class="s">pages/errander/reason</span><span class="q">"</span><span class="p">,</span></div>
<div class="ln" style="top:421px">22</div>
<div class="cl" style="top:421px;left:99.30px"><span class="q">"</span><span class="s">pages/errander/detail</span><span class="q">"</span><span class="p">,</span></div>
<div class="ln cur" style="top:440px">23</div>
<div class="cl" style="top:440px;left:99.30px"><span class="q">"</span><span class="s">pages/finance/detail</span><span class="q">"</span><span class="p">,</span></div>
<div class="ln" style="top:459px">24</div>
<div class="cl" style="top:459px;left:99.30px"><span class="q">"</span><span class="s">pages/order/reason</span><span class="q">"</span><span class="p">,</span></div>
<div class="ln" style="top:478px">25</div>
<div class="cl" style="top:478px;left:99.30px"><span class="q">"</span><span class="s">pages/finance/getcashDetail</span><span class="q">"</span><span class="p">,</span></div>
<div class="ln" style="top:497px">26</div>
<div class="cl" style="top:497px;left:99.30px"><span class="q">"</span><span class="s">pages/member/profilePassword</span><span class="q">"</span></div>
<div class="ln" style="top:516px">27</div>
<div class="cl" style="top:516px;left:83.90px"><span class="m bx">]</span><span class="p">,</span></div>
<div class="ln" style="top:535px">28</div>
<div class="cl" style="top:535px;left:83.90px"><span class="k"><span class="q">"</span>requiredBackgroundModes<span class="q">"</span></span><span class="p">:</span><span class="m">[</span><span class="q">"</span><span class="s">audio</span><span class="q">"</span><span class="p">,</span><span class="q">"</span><span class="s">backgroundAudioMode</span><span class="q">"</span><span class="m">]</span><span class="p">,</span></div>
<div class="ln" style="top:554px">29</div>
<div class="cl" style="top:554px;left:99.30px"><span class="k"><span class="q">"</span>permission<span class="q">"</span></span><span class="p">: </span><span class="m">{</span></div>
<svg class="a" style="left:50px;top:554px" width="12" height="19"><path d="M1 7 L5.5 11.5 L10 7" fill="none" stroke="#c5c5c5" stroke-width="1.2"/></svg>
<div class="ln" style="top:573px">30</div>
<div class="cl" style="top:573px;left:130.10px"><span class="kb"><span class="q">"</span>scope.userLocation<span class="q">"</span></span><span class="p">: </span><span class="b">{</span></div>
<svg class="a" style="left:50px;top:573px" width="12" height="19"><path d="M1 7 L5.5 11.5 L10 7" fill="none" stroke="#c5c5c5" stroke-width="1.2"/></svg>
 </div>
</div>
<div id="sep" class="a"></div>
<div id="panel" class="a">
 <div class="a" style="left:0;top:0;width:482px;height:1px;background:#3d3d3d"></div>
 <div class="a" style="left:0;top:1px;width:482px;height:29px;background:#2d2d2d"></div>
 <div class="a" style="left:20px;top:9px;font-size:11.3px;color:#f0f0f0">调试器</div>
 <div class="a" style="left:20px;top:28px;width:33px;height:2px;background:#e8e8e8"></div>
 <div class="a" style="left:61px;top:9px;width:33px;height:16px;border-radius:8px;background:#484848;font-size:12px;color:#e6e6e6;text-align:center;line-height:16px;white-space:nowrap">2, 22</div>
 <div class="a" style="left:114px;top:8.5px;font-size:12px;color:#9c9c9c">问题</div>
 <div class="a" style="left:156px;top:8.5px;font-size:12px;color:#9c9c9c">输出</div>
 <div class="a" style="left:198px;top:8.5px;font-size:12px;color:#9c9c9c">终端</div>
 <div class="a" style="left:240px;top:8.5px;font-size:12px;color:#9c9c9c">代码质量</div>
 <div class="a" style="left:0;top:30px;width:482px;height:26px;background:#292a2d;border-bottom:1px solid #3a3a3a"></div>
 <svg class="a" style="left:8px;top:35px" width="18" height="16"><path d="M7.5 13.5 H1.5 V1.5 H13.5 V6.5" fill="none" stroke="#a0a0a0" stroke-width="1.1"/><path d="M7 6 L15.5 9.5 L12 10.8 L15 14 L13.8 15 L10.8 11.8 L9.2 15 Z" fill="#a0a0a0"/></svg>
 <div class="a" style="left:34.5px;top:35px;width:1px;height:16px;background:#444"></div>
 <div class="a" style="left:41px;top:30px;width:54px;height:26px;background:#000"></div>
 <div class="a dt" style="left:52px;color:#f0f0f0">Wxml</div>
 <div class="a dt" style="left:106px">Console</div>
 <div class="a dt" style="left:172px">Sources</div>
 <div class="a dt" style="left:238px">Network</div>
 <div class="a dt" style="left:306px">Performance</div>
 <div class="a dt" style="left:398px">Memory</div>
 <div class="a dt" style="left:465px">Application</div>
 <div class="a" style="left:0;top:57px;width:482px;height:152px;background:#242424"></div>
 <div class="a tree" style="left:13px;top:60px"><span class="tg">&lt;page&gt;</span></div>
 <div class="a tri r" style="left:18px;top:81px;border-left-color:#a0a0a0"></div>
 <div class="a tree" style="left:25px;top:77px"><span class="tg">&lt;view </span><span class="at">class</span><span class="tg">=</span><span class="av">"container"</span><span class="tg">&gt;</span><span style="color:#ddd">…</span><span class="tg">&lt;/view&gt;</span></div>
 <div class="a tree" style="left:13px;top:94px"><span class="tg">&lt;/page&gt;</span></div>
</div>
</body></html>
